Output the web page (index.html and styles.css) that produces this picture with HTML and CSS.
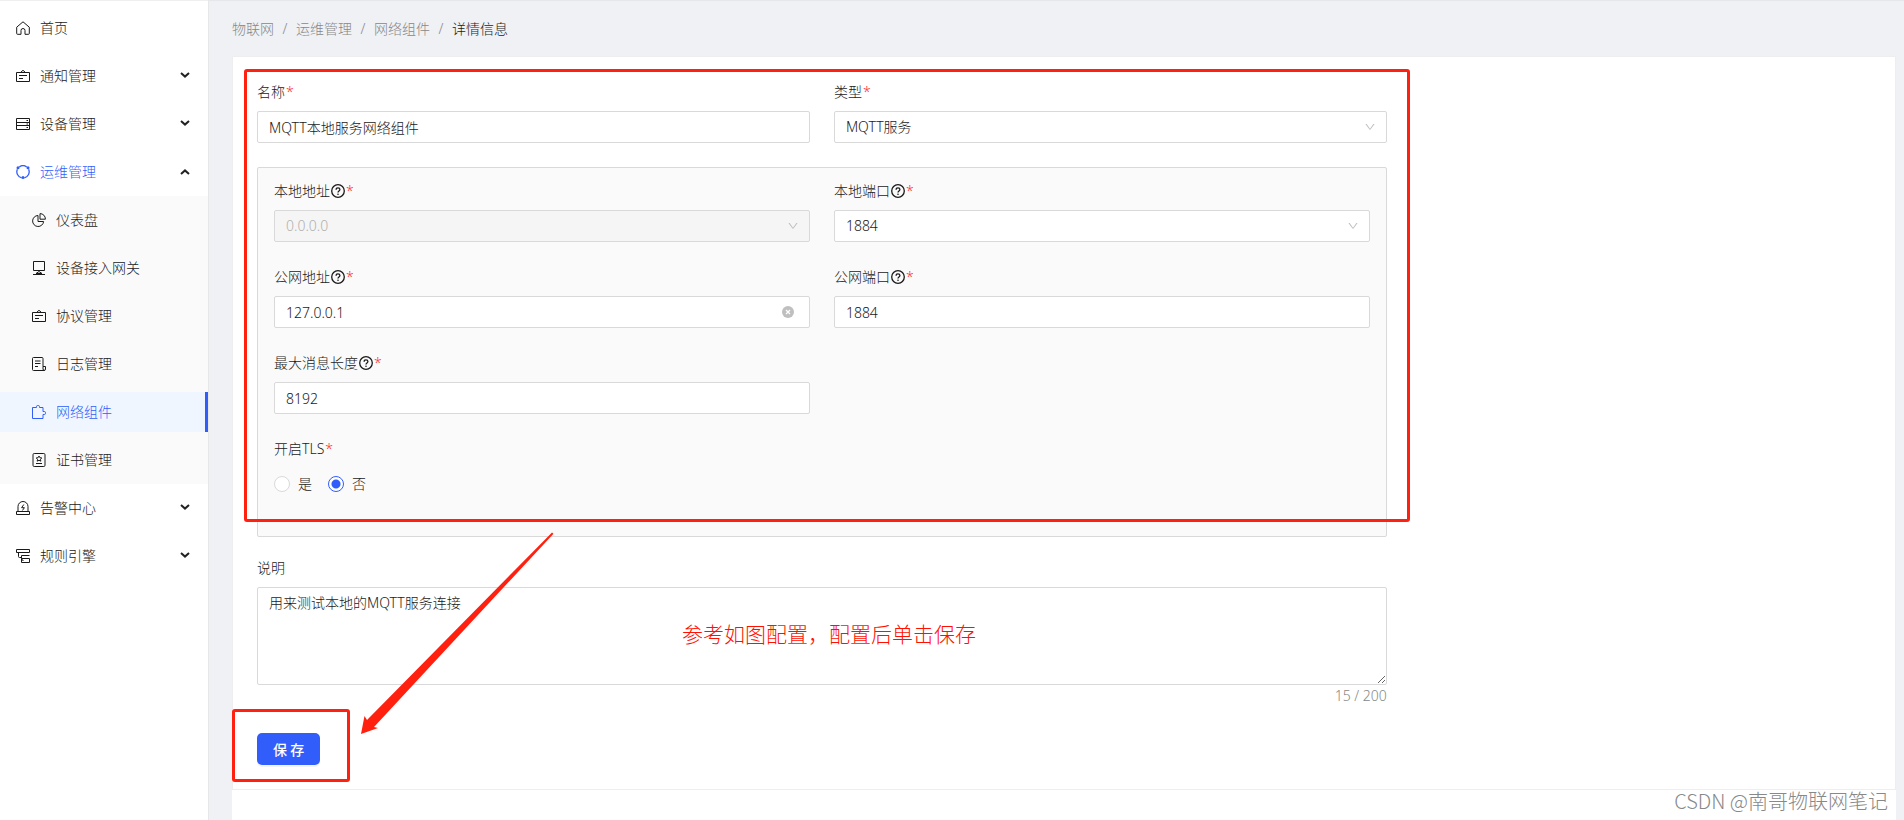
FILE: index.html
```html
<!DOCTYPE html>
<html lang="zh-CN">
<head>
<meta charset="utf-8">
<title>网络组件 - 详情信息</title>
<link rel="stylesheet" href="styles.css">
</head>
<body>
<svg class="sprite" aria-hidden="true">
  <symbol id="i-down" viewBox="0 0 1024 1024"><path fill="currentColor" d="M884 256h-75c-5.1 0-9.9 2.5-12.9 6.6L512 654.2 227.9 262.6c-3-4.1-7.8-6.6-12.9-6.6h-75c-6.5 0-10.3 7.4-6.5 12.7l352.6 486.1c12.8 17.6 39 17.6 51.7 0l352.6-486.1c3.9-5.3.1-12.7-6.4-12.7z"/></symbol>
  <symbol id="i-help" viewBox="0 0 14 14"><g fill="none" stroke="currentColor" stroke-width="1.3"><circle cx="7" cy="7" r="6.3"/><path d="M5.1 5.7c0-1.1.8-1.8 1.9-1.8s1.900.7 1.900 1.700c0 1.400-1.900 1.400-1.900 2.800"/></g><circle cx="7" cy="10.200" r=".8" fill="currentColor"/></symbol>
  <symbol id="i-board" viewBox="0 0 14 14"><g fill="none" stroke="currentColor"><path d="M.5 3.5h13v9H.5z"/><path d="M4.8 3.2 7 1.3l2.2 1.9M3 6.5h8M3 9.5h4"/></g></symbol>
</svg>
<div class="layout">
  <aside class="sider">
    <nav>
      <ul class="menu">
        <li><a class="item" href="#"><svg class="icon" viewBox="0 0 14 14"><path d="M5 13.3H1.5a.8.8 0 0 1-.8-.8V6.2L7 .8l6.3 5.4v6.3a.8.8 0 0 1-.8.8H9V9.500a2 2 0 0 0-4 0z"/></svg>首页</a></li>
        <li><a class="item" href="#"><svg class="icon"><use href="#i-board"/></svg>通知管理<svg class="arrow" viewBox="0 0 10 8"><path d="m1 1 4 3.600L9 1"/></svg></a></li>
        <li><a class="item" href="#"><svg class="icon" viewBox="0 0 14 14"><path d="M.5 1.5h13v11H.5zM.5 5.500h13M.5 8.500h13M10.500 3.500H12M10.500 7H12M10.500 10.500H12"/></svg>设备管理<svg class="arrow" viewBox="0 0 10 8"><path d="m1 1 4 3.600L9 1"/></svg></a></li>
        <li>
          <a class="item open" href="#"><svg class="icon sync" viewBox="0 0 14 14"><path d="M3.300 1.900a6.200 6.200 0 0 1 7.400 0M12.600 4.200a6.200 6.200 0 0 1-4.200 8.600M5.600 12.800a6.200 6.200 0 0 1-4.200-8.600"/><g class="solid"><circle cx="2" cy="2.800" r="1.500"/><circle cx="12" cy="2.800" r="1.500"/><circle cx="7" cy="12.500" r="1.500"/></g></svg>运维管理<svg class="arrow" viewBox="0 0 10 8"><path d="m1 6 4-3.600L9 6"/></svg></a>
          <ul class="submenu">
            <li><a class="item" href="#"><svg class="icon" viewBox="0 0 14 14"><path d="M6 2.500a5.500 5.500 0 1 0 5.600 6H6zM8 .6v5.600h5.400A5.400 5.400 0 0 0 8 .6z"/></svg>仪表盘</a></li>
            <li><a class="item" href="#"><svg class="icon" viewBox="0 0 14 14"><path d="M1.500.5h11v9h-11zM1 13.500h12M4 12.500l3-2 3 2z"/></svg>设备接入网关</a></li>
            <li><a class="item" href="#"><svg class="icon"><use href="#i-board"/></svg>协议管理</a></li>
            <li><a class="item" href="#"><svg class="icon" viewBox="0 0 14 14"><path d="M11 9.500V1.500a1 1 0 0 0-1-1H1.500a1 1 0 0 0-1 1v11a1 1 0 0 0 1 1H12a1.500 1.500 0 0 0 1.500-1.500V9.500H11V12a1.400 1.400 0 0 0 1.400 1.400M3 4h5.500M3 6.500h5.500M3 9.500h3"/></svg>日志管理</a></li>
            <li><a class="item selected" href="#" aria-current="page"><svg class="icon" viewBox="0 0 14 14"><path d="M.5 2.500H4.500V1.700A1.200 1.200 0 0 1 5.700.5h.6A1.200 1.200 0 0 1 7.500 1.700v.8h3.500V6.500h1.300a1.200 1.200 0 0 1 1.200 1.200v.6a1.200 1.200 0 0 1-1.200 1.200H11v4H.5z"/></svg>网络组件</a></li>
            <li><a class="item" href="#"><svg class="icon" viewBox="0 0 14 14"><rect x="1" y=".5" width="12" height="13" rx="1.200"/><path d="m7 3 .9 1.700 1.900.3-1.400 1.300.4 1.900L7 7.300l-1.800.9.4-1.900L4.200 5l1.900-.3zM4 10.500h6"/></svg>证书管理</a></li>
          </ul>
        </li>
        <li><a class="item" href="#"><svg class="icon" viewBox="0 0 14 14"><path d="M2 10.500V5.500a5 5 0 0 1 10 0v5M.5 10.500h13v3H.5zM7.800 3.500 5.600 6.700h2.800L6.400 9.500"/></svg>告警中心<svg class="arrow" viewBox="0 0 10 8"><path d="m1 1 4 3.600L9 1"/></svg></a></li>
        <li><a class="item" href="#"><svg class="icon" viewBox="0 0 14 14"><path d="M.5.5h13v3H.5zM2.500 3.500v4a1 1 0 0 0 1 1h2M13.500 6.500h-8v3a2 2 0 0 0 2 2M5.500 9.500h8v4h-8z"/></svg>规则引擎<svg class="arrow" viewBox="0 0 10 8"><path d="m1 1 4 3.600L9 1"/></svg></a></li>
      </ul>
    </nav>
  </aside>
  <main class="main">
    <nav class="crumbs" aria-label="breadcrumb">
      <a href="#">物联网</a><span class="sep">/</span><a href="#">运维管理</a><span class="sep">/</span><a href="#">网络组件</a><span class="sep">/</span><span class="current">详情信息</span>
    </nav>
    <div class="content">
      <section class="card">
        <form class="form">
          <div class="grid">
            <div class="field">
              <label for="name">名称<span class="req">*</span></label>
              <input class="control" id="name" type="text" value="MQTT本地服务网络组件">
            </div>
            <div class="field">
              <label for="type">类型<span class="req">*</span></label>
              <div class="wrap"><select class="control" id="type"><option>MQTT服务</option></select><svg class="caret"><use href="#i-down"/></svg></div>
            </div>
          </div>
          <div class="panel grid">
            <div class="field">
              <label for="host">本地地址<svg class="help"><use href="#i-help"/></svg><span class="req">*</span></label>
              <div class="wrap"><select class="control" id="host" disabled><option>0.0.0.0</option></select><svg class="caret"><use href="#i-down"/></svg></div>
            </div>
            <div class="field">
              <label for="port">本地端口<svg class="help"><use href="#i-help"/></svg><span class="req">*</span></label>
              <div class="wrap"><select class="control" id="port"><option>1884</option></select><svg class="caret"><use href="#i-down"/></svg></div>
            </div>
            <div class="field">
              <label for="phost">公网地址<svg class="help"><use href="#i-help"/></svg><span class="req">*</span></label>
              <div class="wrap"><input class="control" id="phost" type="text" value="127.0.0.1"><button class="clear" type="button" aria-label="清除"><svg viewBox="0 0 12 12"><circle cx="6" cy="6" r="6" fill="#bfbfbf"/><path d="m4 4 4 4m0-4L4 8" stroke="#fff" stroke-width="1.200"/></svg></button></div>
            </div>
            <div class="field">
              <label for="pport">公网端口<svg class="help"><use href="#i-help"/></svg><span class="req">*</span></label>
              <input class="control" id="pport" type="text" value="1884">
            </div>
            <div class="field">
              <label for="max">最大消息长度<svg class="help"><use href="#i-help"/></svg><span class="req">*</span></label>
              <input class="control" id="max" type="text" value="8192">
            </div>
            <fieldset class="field first">
              <legend>开启TLS<span class="req">*</span></legend>
              <div class="radios">
                <label><input type="radio" name="tls">是</label>
                <label><input type="radio" name="tls" checked>否</label>
              </div>
            </fieldset>
          </div>
          <div class="field desc">
            <label for="desc">说明</label>
            <textarea class="control" id="desc" rows="4" maxlength="200">用来测试本地的MQTT服务连接</textarea>
            <div class="count">15 / 200</div>
          </div>
          <div class="actions">
            <button class="save" type="submit">保 存</button>
            <span class="mark mark-save"></span>
          </div>
          <span class="mark mark-form"></span>
          <svg class="pointer" viewBox="0 0 193 203"><path d="M0 202 3.500 184 6 188 191 .5l1.500 1.200L13 195l4 1z"/></svg>
          <p class="note">参考如图配置，配置后单击保存</p>
        </form>
      </section>
    </div>
  </main>
</div>
<div class="watermark">CSDN @南哥物联网笔记</div>
</body>
</html>
```
FILE: styles.css
```css
* { box-sizing: border-box; }
body {
  margin: 0;
  font: 300 14px/22px "Noto Sans", "Noto Sans CJK SC", sans-serif;
  color: #1a1a1a;
  background: #f0f1f5;
}
.sprite { position: absolute; width: 0; height: 0; }
a { color: inherit; text-decoration: none; }
ul { margin: 0; padding: 0; list-style: none; }
input, select, textarea, button { font: inherit; color: inherit; margin: 0; }

.layout {
  display: flex;
  min-height: 100vh;
  box-shadow: inset 0 2px 1px -1px #e4e6ea;
}

/* Sidebar */
.sider {
  flex: 0 0 208px;
  background: #fff;
  box-shadow: 1px 0 0 #e6e7e9, inset 0 2px 1px -1px #eee;
}
.menu { padding-top: 4px; }
.menu > li, .submenu > li { display: flow-root; }
.item {
  display: flex;
  align-items: center;
  gap: 10px;
  height: 40px;
  margin: 4px 0;
  padding: 0 18px 0 16px;
}
.icon {
  width: 14px;
  height: 14px;
  flex: none;
  fill: none;
  stroke: currentColor;
  stroke-width: 1;
}
.sync { stroke-width: 1.3; }
.icon .solid { fill: currentColor; stroke: none; }
.arrow {
  width: 10px;
  height: 8px;
  margin-left: auto;
  fill: none;
  stroke: #222;
  stroke-width: 2;
}
.open { color: #315efb; }
.submenu { background: #fafafa; }
.submenu .item { padding-left: 32px; }
.submenu .selected {
  color: #315efb;
  background: #eff6ff;
  box-shadow: inset -3px 0 0 #315efb;
}

/* Page */
.main {
  flex: 1;
  min-width: 0;
  display: flex;
  flex-direction: column;
  padding: 18px 8px 0 24px;
}
.crumbs {
  display: flex;
  gap: 8px;
  margin-bottom: 16px;
  color: #888;
}
.sep { width: 6px; text-align: center; }
.current { color: #1a1a1a; }
.content { flex: 1; background: #fff; }
.card {
  padding: 24px;
  border: 1px solid #eee;
}

/* Form */
.form { position: relative; width: 70%; }
.grid {
  display: grid;
  grid-template-columns: 1fr 1fr;
  gap: 24px;
}
.field {
  display: flex;
  flex-direction: column;
  gap: 8px;
  min-width: 0;
  margin: 0;
  padding: 0;
  border: 0;
}
.field > label, legend {
  display: flex;
  align-items: center;
  height: 22px;
  padding: 0;
}
.first { grid-column: 1; display: block; }
.req { margin-left: 1px; color: #ff2a2d; }
.help { width: 14px; height: 14px; margin-left: 1px; }
.control {
  display: block;
  width: 100%;
  height: 32px;
  padding: 4px 11px;
  border: 1px solid #d9d9d9;
  border-radius: 2px;
  background: #fff;
  outline: 0;
  appearance: none;
}
.control:disabled { color: #b0b0b0; background: #f5f5f5; opacity: 1; }
.wrap { position: relative; }
.caret {
  position: absolute;
  top: 10px;
  right: 11px;
  width: 12px;
  height: 12px;
  color: #bfbfbf;
  pointer-events: none;
}
.clear {
  position: absolute;
  top: 10px;
  right: 16px;
  width: 12px;
  height: 12px;
  padding: 0;
  border: 0;
  background: none;
}
.clear svg { display: block; }
.panel {
  margin: 24px 0 20px;
  padding: 12px 16px 36px;
  border: 1px solid #d9d9d9;
  border-radius: 2px;
  background: #fafafa;
}
.radios { display: flex; gap: 16px; margin-top: 8px; }
.radios label {
  display: flex;
  align-items: center;
  gap: 8px;
  height: 32px;
}
.radios input {
  appearance: none;
  width: 16px;
  height: 16px;
  border: 1px solid #d9d9d9;
  border-radius: 50%;
  background: #fff;
}
.radios input:checked {
  border-color: #315efb;
  background: radial-gradient(circle, #315efb 4px, #fff 5px);
}
textarea.control { height: auto; resize: vertical; }
.desc .count { margin-top: -8px; color: #888; text-align: right; }
.actions {
  position: relative;
  width: fit-content;
  margin-top: 26px;
}
.save {
  display: block;
  height: 32px;
  padding: 0 16px;
  border: 0;
  border-radius: 5px;
  color: #fff;
  font-family: "Noto Sans CJK SC", sans-serif;
  font-weight: 500;
  background: #315efb;
  box-shadow: 0 2px 0 #f3f3f3;
}

/* Annotations */
.mark {
  position: absolute;
  border: 3px solid #ff2010;
  border-radius: 3px;
  pointer-events: none;
}
.mark-form { top: -12px; left: -13px; right: -23px; height: 453px; }
.mark-save { top: -24px; left: -25px; right: -30px; bottom: -17px; }
.pointer {
  position: absolute;
  top: 451px;
  left: 104px;
  width: 193px;
  height: 203px;
  fill: #ff2010;
  pointer-events: none;
}
.note {
  position: absolute;
  top: 538px;
  left: 425px;
  margin: 0;
  color: #ff1000;
  font-size: 21px;
  line-height: 30px;
  white-space: nowrap;
}
.watermark {
  position: absolute;
  right: 16px;
  bottom: 4px;
  color: #888;
  font-family: "Noto Sans CJK SC", sans-serif;
  font-size: 20px;
  line-height: 30px;
}
```
